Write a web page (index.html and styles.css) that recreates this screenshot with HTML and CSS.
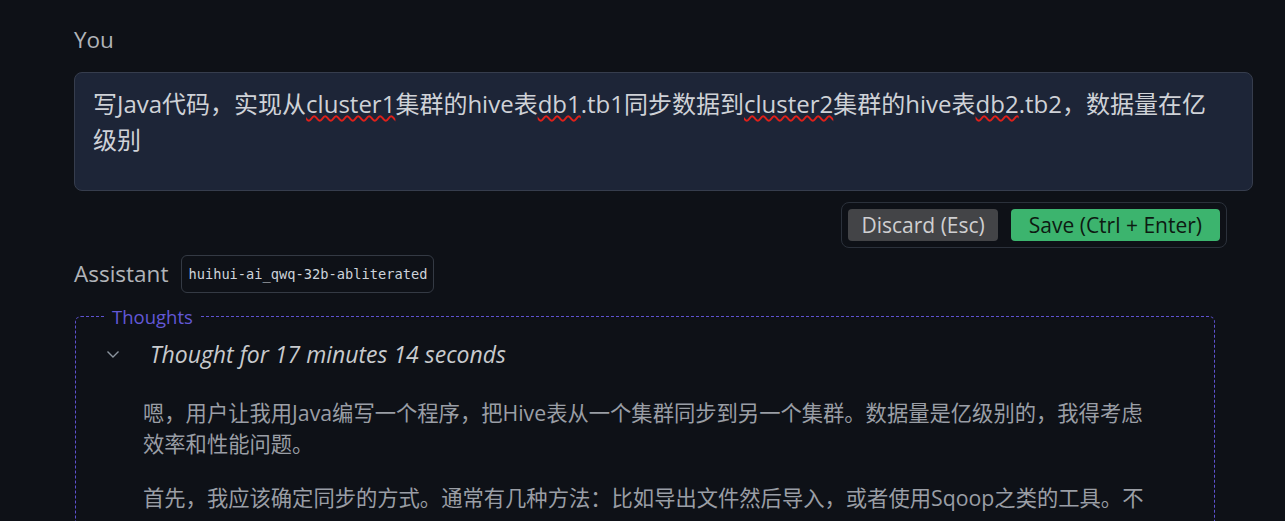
FILE: index.html
```html
<!DOCTYPE html>
<html lang="zh-CN">
<head>
    <meta charset="UTF-8">
    <meta name="viewport" content="width=device-width, initial-scale=1.0">
    <title>Chat</title>
    <link rel="stylesheet" href="styles.css">
</head>
<body>
    <div class="chat">
        <div class="role">You</div>
        <div class="edit-box">写Java代码，实现从<span class="typo">cluster1</span>集群的hive表<span class="typo">db1</span>.tb1同步数据到<span class="typo">cluster2</span>集群的hive表<span class="typo">db2</span>.tb2，数据量在亿级别</div>
        <div class="edit-actions">
            <div class="action-group">
                <button class="btn btn-discard">Discard (Esc)</button>
                <button class="btn btn-save">Save (Ctrl + Enter)</button>
            </div>
        </div>

        <div class="assistant-row">
            <span class="role">Assistant</span>
            <span class="model-badge">huihui-ai_qwq-32b-abliterated</span>
        </div>

        <fieldset class="thoughts">
            <legend>Thoughts</legend>
            <div class="thought-head">
                <svg class="chevron" width="16" height="16" viewBox="0 0 16 16">
                    <path d="M2.5 5.5 L8 11 L13.5 5.5" fill="none" stroke="#8b949e" stroke-width="1.4"/>
                </svg>
                <span class="thought-title">Thought for 17 minutes 14 seconds</span>
            </div>
            <div class="thought-body">
                <p>嗯，用户让我用Java编写一个程序，把Hive表从一个集群同步到另一个集群。数据量是亿级别的，我得考虑效率和性能问题。</p>
                <p>首先，我应该确定同步的方式。通常有几种方法：比如导出文件然后导入，或者使用Sqoop之类的工具。不</p>
            </div>
        </fieldset>
    </div>
</body>
</html>
```

FILE: styles.css
```css
body {
    margin: 0;
    background-color: #0e1117;
    font-family: "Open Sans", "Noto Sans CJK SC", sans-serif;
    color: #c9cdd3;
    overflow: hidden;
}
.chat {
    width: 1179px;
    padding: 25px 0 0 74px;
    display: flex;
    flex-direction: column;
}
.role {
    font-size: 22.5px;
    line-height: 30px;
    color: #b1b4b9;
}
.edit-box {
    margin-top: 17px;
    height: 89px;
    padding: 13px 32px 15px 18px;
    background-color: #1d2537;
    border: 1px solid #363d4d;
    border-radius: 8px;
    font-size: 24px;
    line-height: 36px;
    color: #cfd2d7;
}
.typo {
    text-decoration: underline wavy #e0201a;
    text-decoration-thickness: 1.5px;
    text-underline-offset: 2px;
}
.edit-actions {
    display: flex;
    justify-content: flex-end;
    margin-top: 11px;
    padding-right: 26px;
}
.action-group {
    display: flex;
    gap: 13px;
    padding: 6px;
    border: 1px solid #2b313b;
    border-radius: 8px;
}
.btn {
    height: 32px;
    padding: 0 13px;
    border: none;
    border-radius: 4px;
    font-family: "Open Sans", sans-serif;
    font-size: 21px;
    line-height: 32px;
    cursor: pointer;
}
.btn-discard {
    background-color: #434447;
    color: #cfcfd1;
}
.btn-save {
    padding: 0 18px;
    background-color: #3cb46e;
    color: #0d1a12;
}
.assistant-row {
    display: flex;
    align-items: center;
    gap: 13px;
    margin-top: 7px;
}
.model-badge {
    height: 36px;
    line-height: 36px;
    padding: 0 6px;
    border: 1px solid #343a44;
    border-radius: 6px;
    font-family: "DejaVu Sans Mono", monospace;
    font-size: 13.7px;
    color: #cdd3da;
}
.thoughts {
    margin: 11px 38px 0 1px;
    padding: 10px 28px 0 28px;
    border: 1px dashed #5d52cf;
    border-radius: 6px;
    min-width: 0;
}
.thoughts legend {
    padding: 0 8px;
    font-size: 18.5px;
    line-height: 25px;
    color: #6258d6;
}
.thought-head {
    display: flex;
    align-items: center;
    height: 30px;
}
.chevron {
    width: 16px;
    margin-left: 1px;
    margin-right: 29px;
}
.thought-title {
    font-size: 23px;
    font-style: italic;
    color: #c8cacd;
}
.thought-body {
    padding: 0 36px 0 39px;
    margin-top: 28px;
}
.thought-body p {
    margin: 0 0 23px 0;
    font-size: 21.3px;
    line-height: 31px;
    color: #9a9ea5;
}
```
